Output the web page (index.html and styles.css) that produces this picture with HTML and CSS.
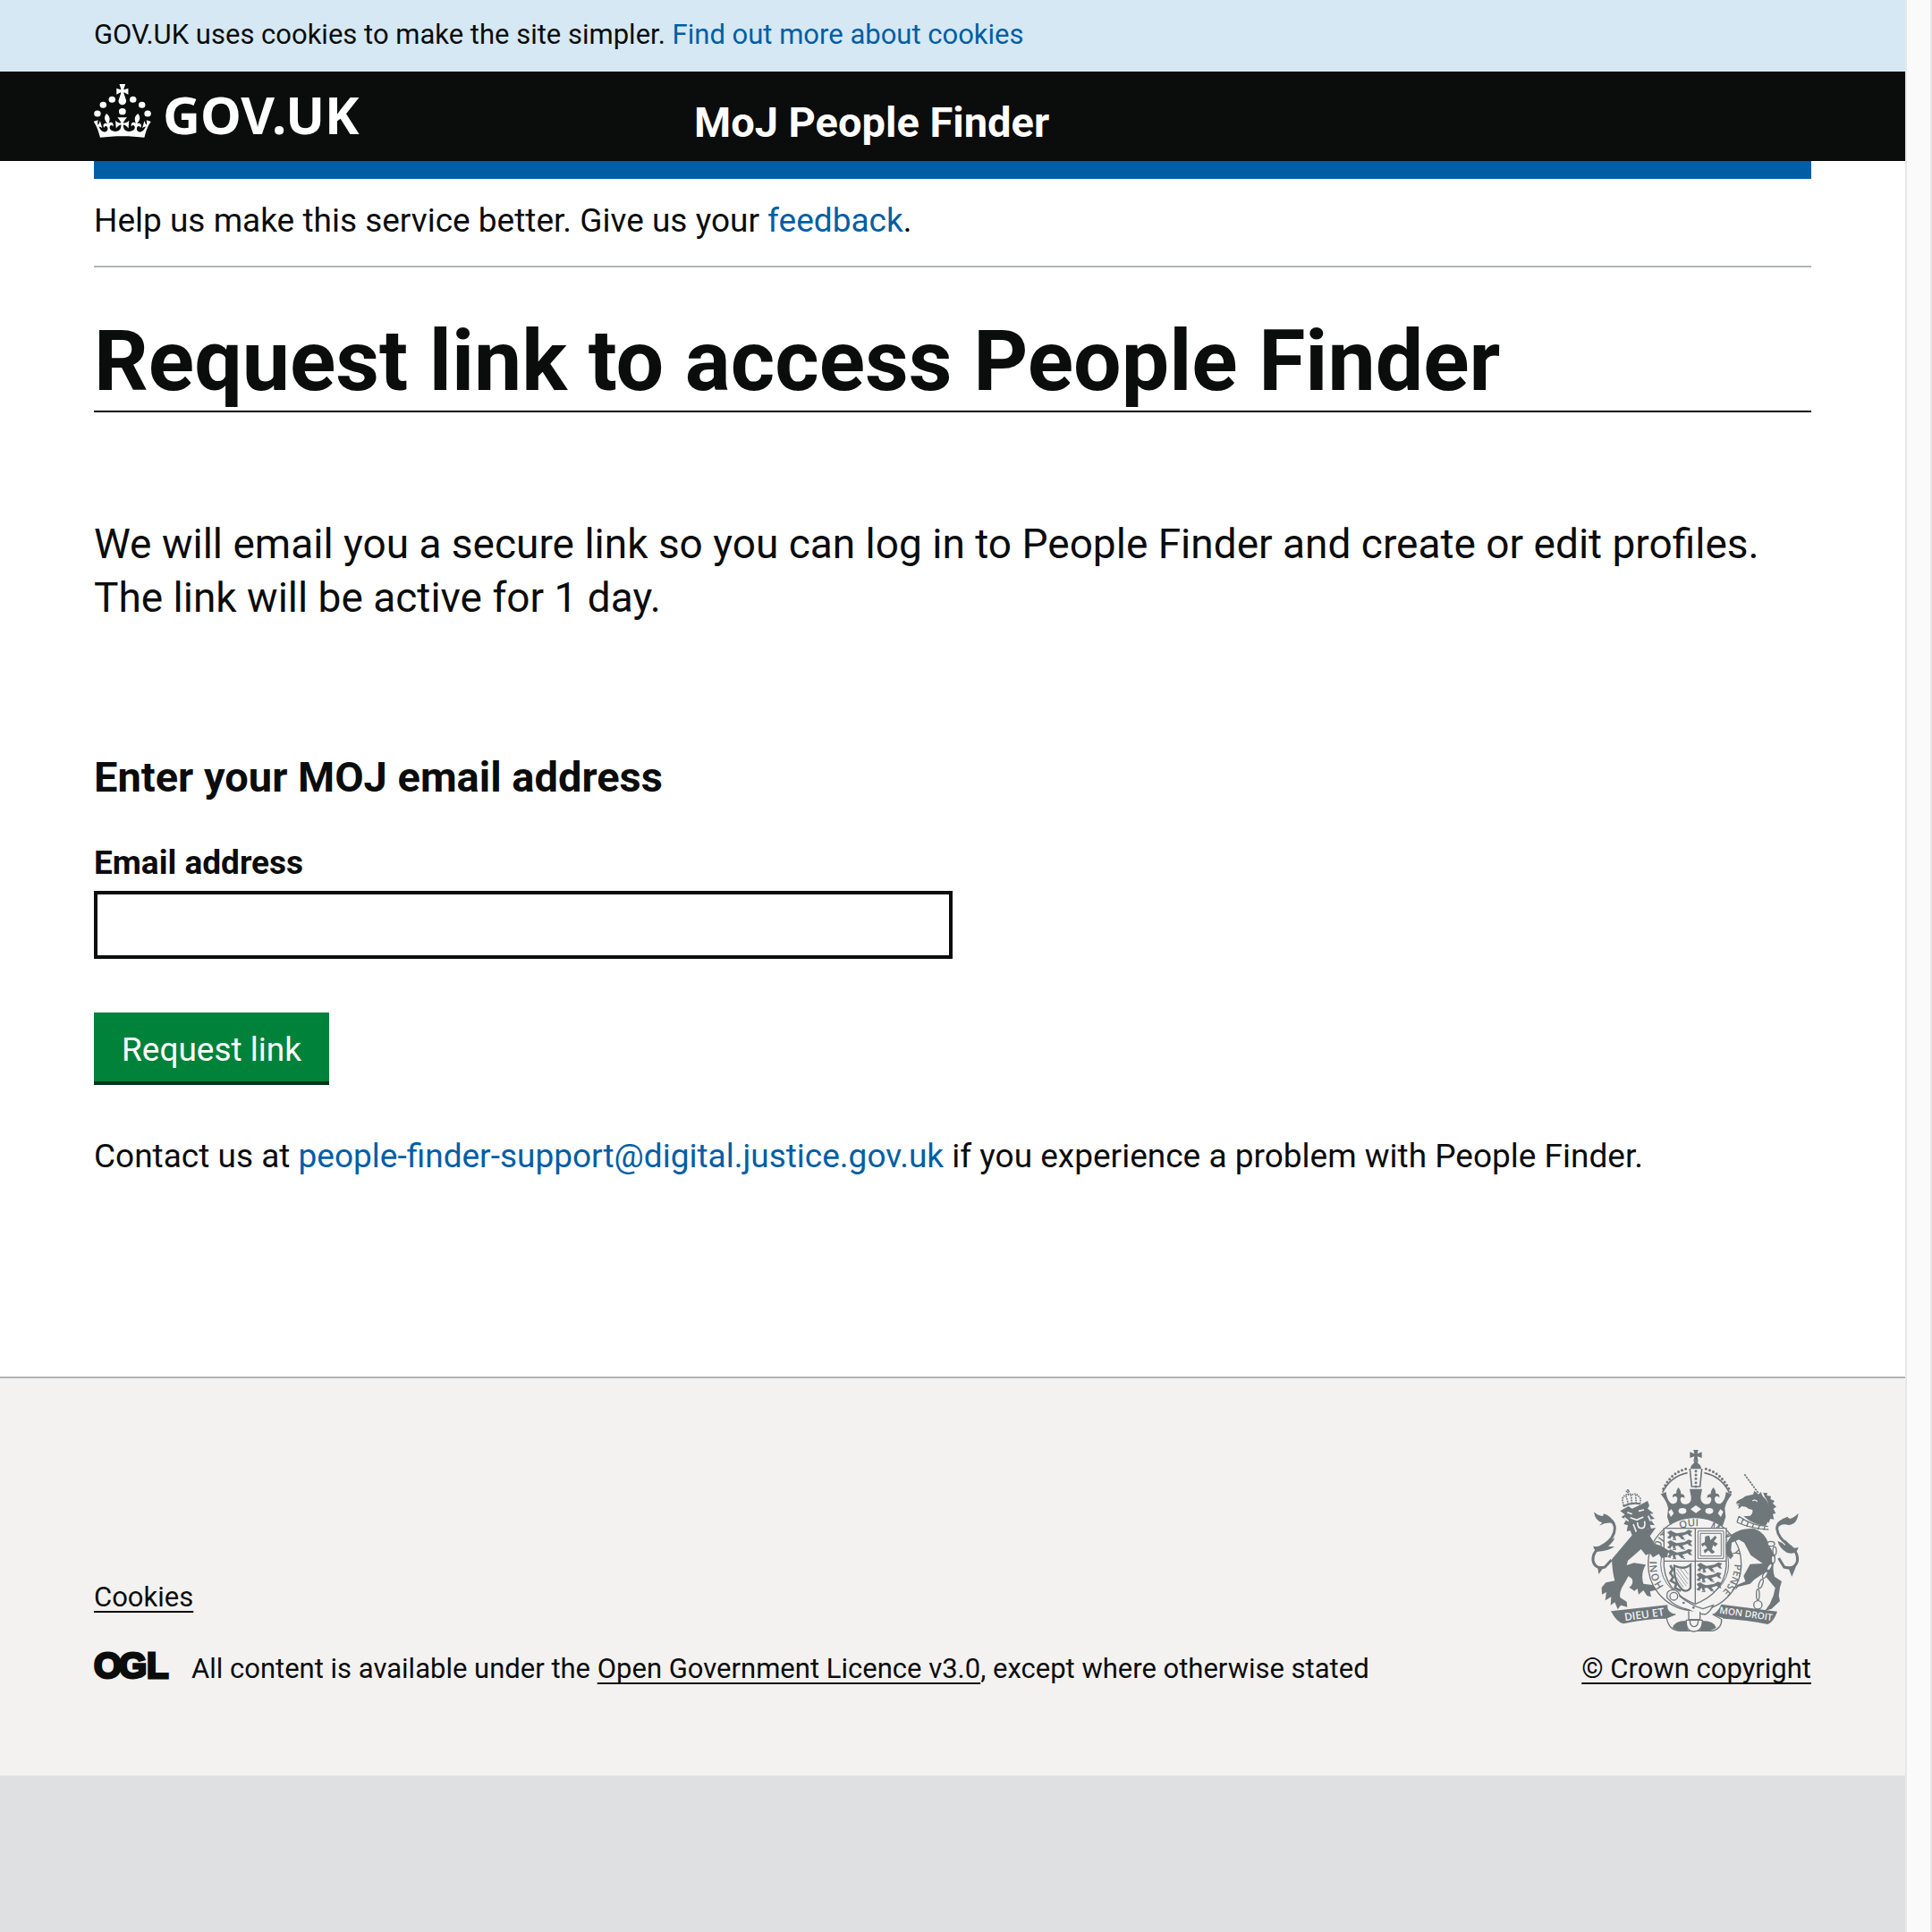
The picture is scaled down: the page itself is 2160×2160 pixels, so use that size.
FILE: index.html
```html
<!DOCTYPE html>
<html lang="en">
<head>
  <meta charset="utf-8">
  <meta name="viewport" content="width=device-width, initial-scale=1">
  <title>Request link to access People Finder</title>
  <link rel="stylesheet" href="styles.css">
</head>
<body>
  <div class="page">
    <div class="cookie-bar">
      <p class="container">GOV.UK uses cookies to make the site simpler. <a class="link" href="#cookies">Find out more about cookies</a></p>
    </div>

    <header class="site-header">
      <div class="container site-header__inner">
        <a class="logo" href="#home">
          <svg class="logo__crown" viewBox="42 282 180 180" preserveAspectRatio="none" aria-hidden="true" fill="currentColor">
            <circle cx="53" cy="381" r="10.5"/><circle cx="71" cy="352" r="10.5"/><circle cx="99" cy="334" r="10.5"/>
            <circle cx="165" cy="334" r="10.5"/><circle cx="193" cy="352" r="10.5"/><circle cx="211" cy="381" r="10.5"/>
            <circle cx="131.500" cy="374" r="11"/>
            <path transform="translate(34.700 282) scale(1.467 1.570)" d="M69.700 17.700l8.900 4.700V9.300l-8.900 2.800c-.2-.3-.5-.6-.9-.9L72.400 0H59.600l3.500 11.200c-.3.3-.6.5-.9.9l-8.800-2.800v13.100l8.800-4.700c.3.3.6.7.9.9l-5 15.400v.1c-.2.8-.4 1.600-.4 2.400 0 4.100 3.100 7.500 7 8.100h.2c.3 0 .7.1 1 .1.4 0 .7 0 1-.1h.2c4-.6 7.100-4.100 7.100-8.100 0-.8-.1-1.700-.4-2.400V34l-5.100-15.400c.4-.2.7-.6 1-.9z"/>
            <path transform="translate(34.700 308) scale(1.467 1.600)" d="M66 92.800c16.900 0 32.800 1.100 47.100 3.200 4-16.900 8.900-26.700 14-33.500l-9.600-3.400c1 4.900 1.100 7.200 0 10.200-1.500-1.400-3-4.300-4.200-8.700L108.600 76c2.800-2 5-3.200 7.500-3.300-4.400 9.400-10 11.900-13.600 11.200-4.300-.8-6.300-4.600-5.600-7.900 1-4.700 5.700-5.900 8-.5 4.300-8.700-3-11.400-7.600-8.800 7.100-7.200 7.900-13.500 2.100-21.100-8 6.100-8.100 12.300-4.500 20.800-4.700-5.400-12.100-2.500-9.500 6.200 3.400-5.200 7.900-2 7.200 3.100-.6 4.300-6.400 7.800-13.500 7.200-10.300-.9-10.900-8-11.200-13.800 2.500-.5 7.100 1.800 11 7.300L80.200 60c-4.100 4.400-8 5.300-12.300 5.400 1.400-4.400 8-11.600 8-11.600H55.500s6.400 7.200 7.900 11.600c-4.200-.1-8-1-12.300-5.400l1.400 16.400c3.900-5.500 8.500-7.700 10.900-7.300-.3 5.800-.9 12.800-11.100 13.800-7.200.6-12.900-2.900-13.500-7.200-.7-5 3.800-8.300 7.100-3.100 2.700-8.700-4.600-11.600-9.400-6.200 3.700-8.500 3.600-14.700-4.600-20.800-5.800 7.600-5 13.900 2.200 21.100-4.700-2.600-11.900.1-7.700 8.800 2.300-5.500 7.100-4.200 8.100.5.7 3.300-1.300 7.100-5.700 7.900-3.500.7-9-1.800-13.500-11.200 2.500.1 4.700 1.300 7.500 3.300l-4.700-15.400c-1.200 4.400-2.700 7.200-4.300 8.700-1.100-3-.9-5.300 0-10.200l-9.500 3.400c5 6.900 9.900 16.700 14 33.500 14.800-2.100 30.800-3.200 47.700-3.200z"/>
          </svg>
          <span class="logo__text">GOV.UK</span>
        </a>
        <a class="service-name" href="#service">MoJ People Finder</a>
      </div>
    </header>

    <main class="main">
      <div class="container main__inner">
        <p class="feedback">Help us make this service better. Give us your <a class="link" href="#feedback">feedback</a>.</p>
        <h1 class="title">Request link to access People Finder</h1>
        <p class="lead">We will email you a secure link so you can log in to People Finder and create or edit profiles. The link will be active for 1 day.</p>

        <form class="form">
          <h2 class="form__heading">Enter your MOJ email address</h2>
          <label class="form__label" for="email">Email address</label>
          <input class="form__input" id="email" name="email" type="email">
          <button class="button" type="submit">Request link</button>
        </form>

        <p class="contact">Contact us at <a class="link" href="#support">people-finder-support@digital.justice.gov.uk</a> if you experience a problem with People Finder.</p>
      </div>
    </main>

    <footer class="site-footer">
      <div class="container site-footer__inner">
        <div class="site-footer__meta">
          <a class="footer-link" href="#cookies">Cookies</a>
          <div class="licence">
            <svg class="licence__logo" viewBox="0 0 88 40" role="img" aria-label="Open Government Licence">
              <text x="0 28 59" y="30">OGL</text>
            </svg>
            <p class="licence__text">All content is available under the <a class="footer-link" href="#licence">Open Government Licence v3.0</a>, except where otherwise stated</p>
          </div>
        </div>
        <div class="copyright">
          <svg class="crest" viewBox="75 63 780 612" aria-hidden="true">
            <defs>
              <path id="garter" d="M374 536A127 127 0 0 1 464 319A127 127 0 0 1 505 568"/>
              <g id="lion-passant">
                <path d="M372 339l12-6 10 6 10 4 26-4 14-8 12 4-6 8 6 10-10-2-6-6-18 6 8 8-10 2-12-10-10 2 4 10-10-2-2-10-8 8-10-2 8-8z"/>
                <path d="M374 358l10 2m6 4h12m16-4l14 4" fill="none" stroke="currentColor" stroke-width="3"/>
              </g>
            </defs>

            <!-- royal crown -->
            <path d="M460 63h16l-3 13 15-6v20l-15-5 3 16h-16l3-16-15 5V70l15 6z"/>
            <path d="M461 101h14l-1 6q12 6 12 20h-36q0-14 12-20z"/>
            <path d="M448 126l6 60h28l6-60M496 140q58 12 84 66M440 140q-58 12-84 66" fill="none" stroke="currentColor" stroke-width="5"/>
            <path d="M434 127q-54 14-80 78M502 127q54 14 82 78M468 134v56" fill="none" stroke="currentColor" stroke-width="9" stroke-linecap="round" stroke-dasharray="0 13"/>
            <path d="M348 212l20-8q2 28 18 39 20 4 20-18-6-12-16-2-2-14 12-14 0-12 7-20 9 8 9 22 14 0 12 14-10-8-14 2 0 20 20 18 18-4 16-24l-5-27h42l-5 27q0 20 16 24 20 2 20-18-4-10-14-2-2-14 12-14 0-14 9-22 8 8 8 20 14 0 12 14-10-10-16 2 0 22 20 18 16-11 18-39l20 8q-20 24-24 46l3 30-10 30q-93-28-176 0l-10-30 3-30q-4-22-24-46z"/>
            <g fill="#f3f2f1">
              <ellipse cx="423" cy="268" rx="13" ry="10"/><ellipse cx="513" cy="268" rx="13" ry="10"/>
              <path d="M450 262l18-13 18 13-18 13zM376 270l10-8 8 14-10 12zM560 270l-10-8-8 14 10 12z"/>
            </g>

            <!-- garter and shield -->
            <circle cx="464" cy="446" r="156" fill="#f3f2f1" stroke="currentColor" stroke-width="4"/>
            <circle cx="464" cy="446" r="114" fill="none" stroke="currentColor" stroke-width="3"/>
            <text class="crest__motto"><textPath href="#garter" startOffset="20">HONI</textPath><textPath href="#garter" startOffset="130">SOIT</textPath><textPath href="#garter" startOffset="250">QUI</textPath><textPath href="#garter" startOffset="350">MAL</textPath><textPath href="#garter" startOffset="460">Y</textPath><textPath href="#garter" startOffset="505">PENSE</textPath></text>
            <path d="M361 326h209v128q-8 88-104 126-97-38-105-126z" fill="#f3f2f1" stroke="currentColor" stroke-width="4"/>
            <path d="M466 326v252M361 436h209" fill="none" stroke="currentColor" stroke-width="4"/>
            <use href="#lion-passant"/><use href="#lion-passant" y="33"/><use href="#lion-passant" y="64"/>
            <use href="#lion-passant" x="100" y="109"/><use href="#lion-passant" x="98" y="142"/><use href="#lion-passant" x="98" y="174"/>
            <path d="M475 335h86v92h-86zM483 343h70v76h-70z" fill="none" stroke="currentColor" stroke-width="3"/>
            <path d="M499 353l14-3 4 16 16-16 5 8-10 12 14 8-10 10-6-6-4 14 10 10-10 6-12-12-12 10-4-10 12-8-8-10-8 6-4-10 12-6z"/>
            <path d="M396 452q34 14 54-4v78q-12 16-28 6-30-30-26-80z" fill="none" stroke="currentColor" stroke-width="7"/>
            <path d="M404 462l36 50M402 474l34 46M414 460l28 38M426 458l16 22M402 490l24 34" fill="none" stroke="currentColor" stroke-width="2"/>
            <path d="M382 450l8 14-8 12 10 14-8 12 18 10-4 14 20 10" fill="none" stroke="currentColor" stroke-width="8"/>

            <!-- lion supporter -->
            <path d="M262 340L186 430Q188 474 196 502L166 508 152 524 153 548 168 540 164 568 184 556 182 584 196 574 206 598 216 584 238 590 236 572 214 558Q210 536 230 508L242 486 254 496Q260 514 244 524L262 536 272 528 276 548 292 534 304 552 318 556 314 538 338 532 322 516 292 512Q282 478 300 448L260 442 236 450 240 434 284 396 300 416 314 410 324 424 344 412 352 426 372 422 376 400 350 384 330 378 314 352 334 324 300 330z"/>
            <path d="M224 262l18-10 12 8 30-14 22-12 6 16-6 10 20 16-12 2 16 16-14 2 14 20-16-2 6 20-14-6-6 18-12-8-8 14-14-12-10 14-8-20-12 2 4-20-14-4 8-14-16-10 12-8-16-12z"/>
            <path d="M238 272l16 6M276 268l18-4M248 290l22 8 22-10M272 306q0 20 14 20t10-24M258 312l10 26M236 236l50-10M308 284l8 18M228 290l14 12" fill="none" stroke="#f3f2f1" stroke-width="5"/>
            <path d="M226 250l-5-22q8-18 20-14 4-8 10 0 18-8 24 4 10 4 6 24M234 218l8 28M250 214l4 30M266 214l2 28M240 195v18M233 202h15" fill="none" stroke="currentColor" stroke-width="5" stroke-dasharray="5 3"/>
            <path d="M224 252q30-14 58-8" fill="none" stroke="currentColor" stroke-width="6"/>
            <path d="M148 296q48-2 48 30 0 30-34 54-42 22-39 54 6 30 40 22l22-24" fill="none" stroke="currentColor" stroke-width="9"/>
            <path d="M126 271q12 12 30 14l4-8q24 8 38 34-26-10-54 6l10-10q-24-6-28-36zM124 386q20 4 34-6 18-14 38-22-6 16-22 28l22 2q-28 16-58 16-12-4-14-18zM138 454l20 4-16 22z"/>

            <!-- unicorn supporter -->
            <path d="M631 145l46 62" fill="none" stroke="currentColor" stroke-width="5" stroke-dasharray="7 3"/>
            <path d="M664 200l14 12 8-8 6 14q22 18 24 48 0 30-14 52-38-2-74-32l22-2q10-8 8-20-14-2-22-10l-14-2-12 10 2-12-8-2 14-5-14 1q-2-8 8-13 12-4 22-13l26-6z"/>
            <path d="M694 206l14 2-2 8 14 2-2 10 14 6-6 8 12 12-10 6 8 16-10 2 4 18-12-2-6 14-6-8q18-46-8-82z"/>
            <path d="M658 234q8-6 16 2" fill="none" stroke="#f3f2f1" stroke-width="4"/>
            <path d="M612 286q44 32 98 34M606 306q50 22 106 24M612 286l-6 20M626 295l-6 18M644 304l-6 16M662 311l-6 14M682 316l-6 14M700 318l-4 14" fill="none" stroke="currentColor" stroke-width="4"/>
            <path d="M590 346Q624 322 666 328 702 342 712 380L734 420Q722 456 732 488L756 504 750 524 746 552 750 570 722 596 700 602 716 580 728 552 734 526 704 490 696 476 664 498 650 512 610 522 600 534 606 516 634 504 628 486 650 446 692 444 652 416 630 374 612 364 588 374 586 400 594 418 584 430 570 412 568 380z"/>
            <path d="M782 296q-42 2-42 32 4 30 38 54 36 24 30 56-10 28-44 18l-18-30" fill="none" stroke="currentColor" stroke-width="9"/>
            <path d="M812 275q-4 38-34 40-24-8-40 14 4-34 38-42l4 8q18-4 32-20zM812 390q-6 26-38 18-26-16-32-40 14 4 26 16l-2-20q18 16 24 30zM778 458l26-4-14 34z"/>
            <path d="M568 356l22-8M604 520l-10 10" stroke="currentColor" stroke-width="5"/>
            <g fill="#f3f2f1" stroke="currentColor" stroke-width="4">
              <ellipse cx="720" cy="378" rx="12" ry="8"/><ellipse cx="732" cy="402" rx="6" ry="14"/><ellipse cx="727" cy="430" rx="6" ry="13"/><ellipse cx="715" cy="456" rx="6" ry="13" transform="rotate(30 715 456)"/><ellipse cx="700" cy="482" rx="6" ry="13" transform="rotate(30 700 482)"/><ellipse cx="686" cy="512" rx="6" ry="16" transform="rotate(20 686 512)"/><ellipse cx="676" cy="548" rx="5" ry="18"/><circle cx="676" cy="583" r="14"/>
            </g>

            <!-- garter buckle and motto scroll -->
            <path d="M372 560q-6-28 22-28 18 4 20 22 44 34 78 42l34-12q-8 18-24 30-26 2-56-14-48-10-74-40z" fill="#f3f2f1" stroke="currentColor" stroke-width="4"/>
            <circle cx="394" cy="554" r="13" fill="none" stroke="currentColor" stroke-width="4"/>
            <circle cx="427" cy="576" r="4"/><circle cx="460" cy="592" r="4"/>
            <path d="M183 604l190-21q-4 24 26 32l-32 14q-70 0-142 17-22-4-42-42zM741 605l-188-24q-8 22-28 34l38 14q76 4 146 19 20-8 32-43z"/>
            <path d="M370 626q6 42 44 44h110q32-8 30-40M400 614l-30 12M524 614l28 16" fill="none" stroke="currentColor" stroke-width="4"/>
            <path d="M390 660q6-24 44-24l8 34h-34zM536 660q-6-24-48-24l-6 34h34z"/>
            <path d="M436 634q-2 38 26 38t28-38M448 634q0 22 14 22t14-22M444 604v28h38v-26M434 634h56" fill="#f3f2f1" stroke="currentColor" stroke-width="4"/>
            <text class="crest__scroll" x="230" y="637" transform="rotate(-8 230 637)">DIEU ET</text>
            <text class="crest__scroll crest__scroll--small" x="546" y="611" transform="rotate(8 546 611)">MON DROIT</text>
          </svg>
          <a class="footer-link" href="#copyright">© Crown copyright</a>
        </div>
      </div>
    </footer>
  </div>
  <div class="scroll-track"></div>
</body>
</html>
```
FILE: styles.css
```css
* { box-sizing: border-box; }

body {
  display: flex;
  min-height: 100vh;
  margin: 0;
  background: #dee0e2;
  color: #0b0c0c;
  font-family: Roboto, "Liberation Sans", sans-serif;
  font-size: 37px;
  line-height: 50px;
}

h1, h2, p { margin: 0; }

.page { flex: 1; min-width: 0; }

.scroll-track {
  flex: none;
  width: 30px;
  border: solid #e8e8e8;
  border-width: 0 2px;
  background: #fafafa;
}

.container {
  max-width: 1920px;
  margin: 0 auto;
}

.link { color: #005ea5; text-decoration: none; }

/* Cookie message */
.cookie-bar {
  padding: 19px 0 21px;
  background: #d5e8f3;
  font-size: 31px;
  line-height: 40px;
}

/* Header */
.site-header { background: #0b0c0c; }

.site-header__inner {
  display: grid;
  grid-template-columns: 1fr 2fr;
}

.logo,
.service-name {
  color: #fff;
  font-weight: 700;
  text-decoration: none;
}

.logo {
  display: flex;
  gap: 13px;
  height: 100px;
  padding-top: 14px;
}

.logo__crown { width: 64px; height: 60px; }

.logo__text {
  font-family: "Noto Sans", sans-serif;
  font-size: 58px;
  line-height: 68px;
}

.service-name {
  padding: 27px 0 0 31px;
  font-size: 47px;
  line-height: 60px;
}

/* Main content */
.main { background: #fff; }

.main__inner {
  padding: 22px 0 221px;
  border-top: 20px solid #005ea5;
}

.feedback {
  padding-bottom: 25px;
  border-bottom: 2px solid #b1b4b6;
}

.title {
  margin-top: 55px;
  padding-bottom: 5px;
  border-bottom: 2px solid #0b0c0c;
  font-size: 95px;
  line-height: 100px;
}

.lead {
  margin-top: 117px;
  font-size: 46px;
  line-height: 60px;
}

.form {
  display: flex;
  flex-direction: column;
  align-items: flex-start;
  margin-top: 141px;
}

.form__heading {
  font-size: 47px;
  line-height: 60px;
}

.form__label {
  margin-top: 41px;
  font-weight: 700;
}

.form__input {
  width: 50%;
  height: 76px;
  margin-top: 6px;
  padding: 8px;
  border: 4px solid #0b0c0c;
  border-radius: 0;
  background: #fff;
  font: inherit;
}

.button {
  margin-top: 60px;
  padding: 17px 31px 10px;
  border: 0;
  background: #00823b;
  box-shadow: 0 4px 0 #003618;
  color: #fff;
  font: inherit;
}

.contact { margin-top: 59px; }

/* Footer */
.site-footer {
  padding: 80px 0 99px;
  border-top: 2px solid #b1b4b6;
  background: #f3f2f1;
  font-size: 31px;
  line-height: 40px;
}

.site-footer__inner {
  display: flex;
  justify-content: space-between;
  align-items: flex-end;
}

.footer-link {
  color: #0b0c0c;
  text-decoration: underline 2px;
  text-decoration-skip-ink: none;
  text-underline-offset: 5px;
}

.licence {
  display: flex;
  gap: 21px;
  margin-top: 40px;
}

.licence__logo {
  width: 88px;
  height: 40px;
  overflow: visible;
  fill: #0b0c0c;
  stroke: #0b0c0c;
  stroke-width: 3px;
  font: 700 40px "Liberation Sans", sans-serif;
}

.copyright {
  display: flex;
  flex-direction: column;
  align-items: flex-end;
  gap: 21px;
}

.crest {
  width: 260px;
  height: 204px;
  color: #6f777b;
  fill: #6f777b;
}

.crest__motto { font: 600 34px "Open Sans", sans-serif; }

.crest__scroll {
  fill: #f3f2f1;
  font: 600 36px "Open Sans", sans-serif;
}

.crest__scroll--small { font-size: 31px; }
```
